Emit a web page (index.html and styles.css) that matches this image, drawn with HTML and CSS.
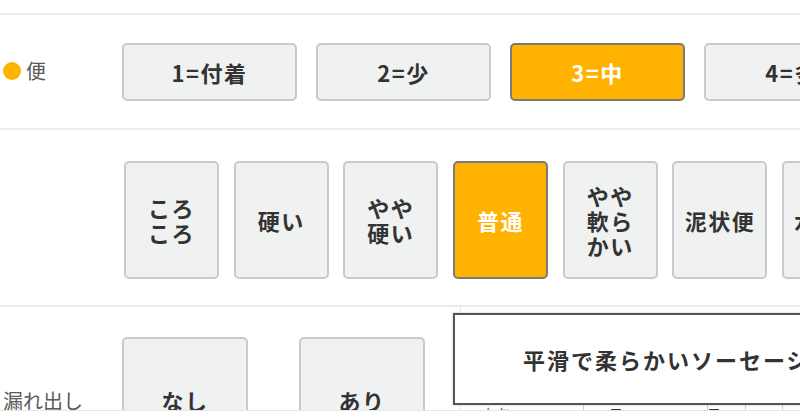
FILE: index.html
```html
<!DOCTYPE html>
<html lang="ja">
<head>
<meta charset="utf-8">
<link rel="stylesheet" href="styles.css">
</head>
<body>
<div class="page">
  <div class="top-space"></div>
  <div class="row row-amount">
    <div class="label"><span class="dot"></span>便</div>
    <div class="options">
      <button class="opt wide">1=付着</button>
      <button class="opt wide">2=少</button>
      <button class="opt wide active">3=中</button>
      <button class="opt wide">4=多</button>
    </div>
  </div>
  <div class="row row-shape">
    <div class="label"></div>
    <div class="options tight">
      <button class="opt tall">ころ<br>ころ</button>
      <button class="opt tall">硬い</button>
      <button class="opt tall">やや<br>硬い</button>
      <button class="opt tall active">普通</button>
      <button class="opt tall">やや<br>軟ら<br>かい</button>
      <button class="opt tall">泥状便</button>
      <button class="opt tall">水様便</button>
    </div>
  </div>
  <div class="row row-leak">
    <div class="label leak-label">漏れ出し</div>
    <div class="options loose">
      <button class="opt square">なし</button>
      <button class="opt square">あり</button>
    </div>
    <div class="side-panel">
      <div class="side-table">
        <div class="cell c1">おむつ</div>
        <div class="cell c2"><b>■</b></div>
        <div class="cell c3"><b>■</b></div>
        <div class="cell c4"></div>
        <div class="cell c5"><b>■</b></div>
      </div>
    </div>
  </div>
  <div class="tooltip">平滑で柔らかいソーセージ状の便</div>
  <div class="bottom-bar"></div>
</div>
</body>
</html>
```
FILE: styles.css
```css
html, body {
  margin: 0;
  padding: 0;
  overflow: hidden;
  background: #fff;
}
body {
  font-family: "Noto Sans CJK JP", "Noto Sans", sans-serif;
  color: #333;
  width: 800px;
  height: 419px;
}
.page {
  position: relative;
  width: 800px;
  height: 419px;
  overflow: hidden;
}
.top-space {
  height: 13px;
  border-bottom: 2px solid #ececec;
}
.row {
  display: flex;
  align-items: stretch;
  border-bottom: 2px solid #ececec;
}
.label {
  flex: 0 0 122px;
  display: flex;
  align-items: center;
  font-size: 20px;
  color: #5a5a5a;
  padding-left: 3px;
  box-sizing: border-box;
}
.dot {
  width: 18px;
  height: 18px;
  border-radius: 50%;
  background: #ffb300;
  margin-right: 5px;
  flex: 0 0 auto;
}
.options {
  display: flex;
  flex-wrap: nowrap;
  gap: 19px;
}
.options.tight {
  gap: 14.7px;
  padding-left: 2px;
}
.options.loose {
  gap: 51px;
}
.opt {
  flex: 0 0 auto;
  box-sizing: border-box;
  border: 2px solid #cacaca;
  border-radius: 5px;
  background: #f0f1f1;
  font-family: "Noto Sans CJK JP", "Noto Sans", sans-serif;
  font-weight: 700;
  font-size: 22px;
  letter-spacing: 1.5px;
  line-height: 25px;
  color: #333;
  padding: 0;
  display: flex;
  align-items: center;
  justify-content: center;
  text-align: left;
}
.opt.active {
  background: #ffb300;
  border-color: #7a7a7a;
  color: #fff;
}
.row-amount {
  height: 115px;
  padding-top: 28px;
  box-sizing: border-box;
}
.row-amount .label {
  margin-top: -28px;
  padding-bottom: 2px;
}
.opt.wide {
  width: 175px;
  height: 58px;
}
.row-shape {
  height: 177px;
  padding-top: 31px;
  box-sizing: border-box;
}
.opt.tall {
  width: 95px;
  height: 118px;
}
.row-leak {
  height: 120px;
  padding-top: 30px;
  box-sizing: border-box;
  border-bottom: none;
}
.leak-label {
  align-items: flex-start;
  padding-top: 49px;
}
.opt.square {
  width: 126px;
  height: 126px;
}
.side-panel {
  margin-top: -30px;
  margin-left: 35px;
  flex: 1 0 auto;
  border-left: 1px solid #e2e2e2;
  position: relative;
}
.side-table {
  position: absolute;
  left: 0;
  top: 92px;
  display: flex;
  font-size: 14px;
  color: #555;
  height: 30px;
}
.cell {
  border-right: 1px solid #ccc;
  box-sizing: border-box;
  padding-top: 4px;
}
.c1 { width: 123px; padding-left: 22px; }
.c2 { width: 124px; padding-left: 26px; }
.c3 { width: 38px; }
.c4 { width: 37px; }
.c5 { width: 60px; padding-left: 34px; border-right: none; }
.cell b { color: #333; font-size: 12px; }
.tooltip {
  position: absolute;
  left: 453px;
  top: 313px;
  width: 420px;
  height: 92px;
  box-sizing: border-box;
  background: #fff;
  border: 2px solid #555;
  box-shadow: 0 0 2px rgba(0,0,0,0.25);
  font-size: 22px;
  font-weight: 700;
  letter-spacing: 2px;
  color: #333;
  padding-left: 68px;
  line-height: 88px;
  white-space: nowrap;
}
.bottom-bar {
  position: absolute;
  left: 0;
  right: 0;
  top: 410px;
  height: 9px;
  background: #fff;
  border-top: 1px solid #e6e6e6;
}
```
